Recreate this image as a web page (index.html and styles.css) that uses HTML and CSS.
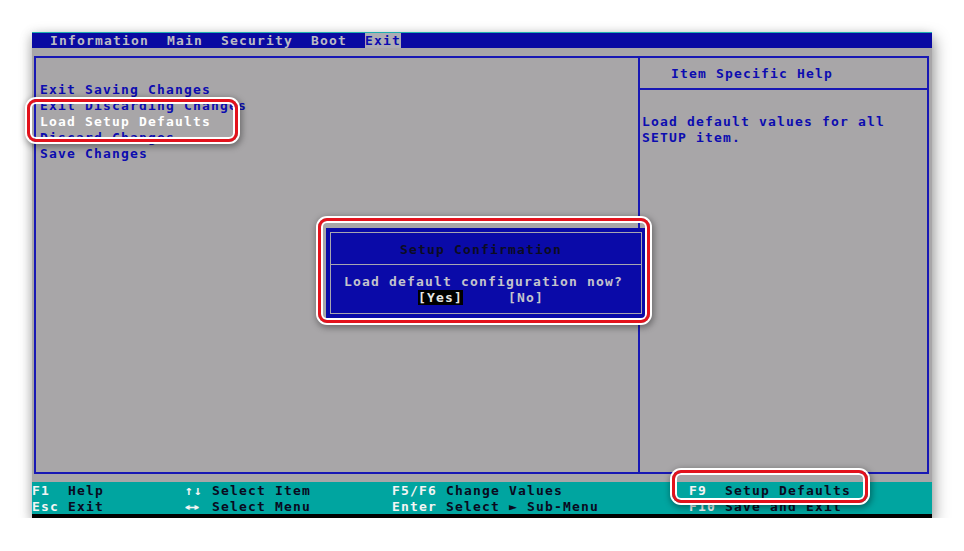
FILE: index.html
```html
<!DOCTYPE html>
<html lang="en">
<head>
<meta charset="utf-8">
<title>BIOS Setup - Exit</title>
<link rel="stylesheet" href="styles.css">
</head>
<body>
<div class="page">
  <div class="screen">
    <div class="topbar"><span class="menu">  Information  Main  Security  Boot  </span><span class="menu active">Exit</span></div>
    <div class="main">
      <div class="box">
        <div class="left-panel">
          <div class="item">Exit Saving Changes</div>
          <div class="item">Exit Discarding Changes</div>
          <div class="item selected">Load Setup Defaults</div>
          <div class="item">Discard Changes</div>
          <div class="item">Save Changes</div>
        </div>
        <div class="right-panel">
          <div class="help-title">Item Specific Help</div>
          <div class="help-body">
            <div class="help-line">Load default values for all</div>
            <div class="help-line">SETUP item.</div>
          </div>
        </div>
      </div>
    </div>
    <div class="bottombar">
      <div class="keyrow"><span class="key">F1</span>  <span class="desc">Help</span>         <span class="key">↑↓</span> <span class="desc">Select Item</span>         <span class="key">F5/F6</span> <span class="desc">Change Values</span>              <span class="key">F9</span>  <span class="desc">Setup Defaults</span></div>
      <div class="keyrow"><span class="key">Esc</span> <span class="desc">Exit</span>         <span class="key wide"><span class="stretch">↔</span></span> <span class="desc">Select Menu</span>         <span class="key">Enter</span> <span class="desc">Select ► Sub-Menu</span>          <span class="key">F10</span> <span class="desc">Save and Exit</span></div>
    </div>

    <div class="dialog">
      <div class="dialog-inner">
        <div class="dlg-title">Setup Confirmation</div>
        <div class="dlg-body">
          <div class="dlg-question">Load default configuration now?</div>
          <div class="dlg-choices"><span class="choice active">[Yes]</span>     <span class="choice">[No]</span></div>
        </div>
      </div>
    </div>

    <div class="frame frame-item"></div>
    <div class="frame frame-dialog"></div>
    <div class="frame frame-key"></div>
  </div>
</div>
</body>
</html>
```

FILE: styles.css
```css
html, body {
  margin: 0;
  padding: 0;
  background: #ffffff;
}

.page {
  padding: 32px 0 0 32px;
}

.screen {
  position: relative;
  width: 900px;
  height: 486px;
  font-family: "DejaVu Sans Mono", "Liberation Mono", monospace;
  font-size: 13px;
  font-weight: bold;
  letter-spacing: 1.173px;
  line-height: 16px;
  box-shadow: 3px 6px 14px rgba(0, 0, 0, 0.35), -2px 2px 10px rgba(0, 0, 0, 0.15);
  background: #a8a6a8;
}

/* top menu bar */
.topbar {
  height: 15px;
  line-height: 16px;
  border-top: 1px solid #20b0b0;
  background: #0a0aa2;
  white-space: pre;
  color: #bcbcc4;
}

.menu.active {
  background: #aeadb4;
  color: #0c0cb0;
}

/* main area */
.main {
  background: #a8a6a8;
  padding: 8px 3px 8px 2px;
}

.box {
  box-sizing: border-box;
  height: 418px;
  border: 2px solid #1818b4;
  display: flex;
}

.left-panel {
  width: 604px;
  flex: none;
  border-right: 2px solid #1818b4;
  padding: 24px 0 0 4px;
  box-sizing: border-box;
  color: #0c0cb0;
}

.item {
  white-space: pre;
}

.item.selected {
  color: #ffffff;
}

.right-panel {
  flex: 1;
  display: flex;
  flex-direction: column;
  color: #0c0cb0;
}

.help-title {
  height: 30px;
  line-height: 31px;
  padding-left: 31px;
  border-bottom: 2px solid #1818b4;
}

.help-body {
  padding: 24px 0 0 2px;
}

.help-line {
  white-space: pre;
}

/* bottom key bar */
.bottombar {
  height: 32px;
  background: #00a5a0;
  border-bottom: 4px solid #000000;
  padding-left: 0;
}

.keyrow {
  white-space: pre;
  height: 16px;
  line-height: 17px;
}

.key {
  color: #f4f4f4;
}

.key.wide {
  display: inline-block;
  width: 18px;
  height: 16px;
  vertical-align: top;
}

.stretch {
  display: inline-block;
  transform: scaleX(1.9);
  transform-origin: left center;
}

.desc {
  color: #0a0a1e;
}

/* confirmation dialog (popup over content) */
.dialog {
  position: absolute;
  left: 294px;
  top: 196px;
  width: 320px;
  padding: 4px;
  box-sizing: border-box;
  background: #0a0aa8;
}

.dialog-inner {
  border: 1px solid #a8a6b0;
}

.dlg-title {
  height: 31px;
  line-height: 33px;
  padding-left: 69px;
  color: #0c0c22;
  border-bottom: 1px solid #a8a6b0;
  white-space: pre;
}

.dlg-body {
  padding: 9px 0 7px 0;
  color: #c4c4cc;
}

.dlg-question {
  padding-left: 13px;
  white-space: pre;
}

.dlg-choices {
  padding-left: 87px;
  white-space: pre;
}

.choice.active {
  background: #000000;
  color: #e6e6e6;
}

/* red highlight frames */
.frame {
  position: absolute;
  box-sizing: border-box;
  border: 3px solid #e3121c;
  border-radius: 9px;
  box-shadow: 0 0 0 2px #ffffff, 1px 2px 6px 3px rgba(0, 0, 0, 0.35), inset 0 0 0 2px #ffffff;
}

.frame-item {
  left: -5px;
  top: 67px;
  width: 211px;
  height: 43px;
}

.frame-dialog {
  left: 286px;
  top: 186px;
  width: 332px;
  height: 105px;
}

.frame-key {
  left: 640px;
  top: 438px;
  width: 196px;
  height: 33px;
}
```
